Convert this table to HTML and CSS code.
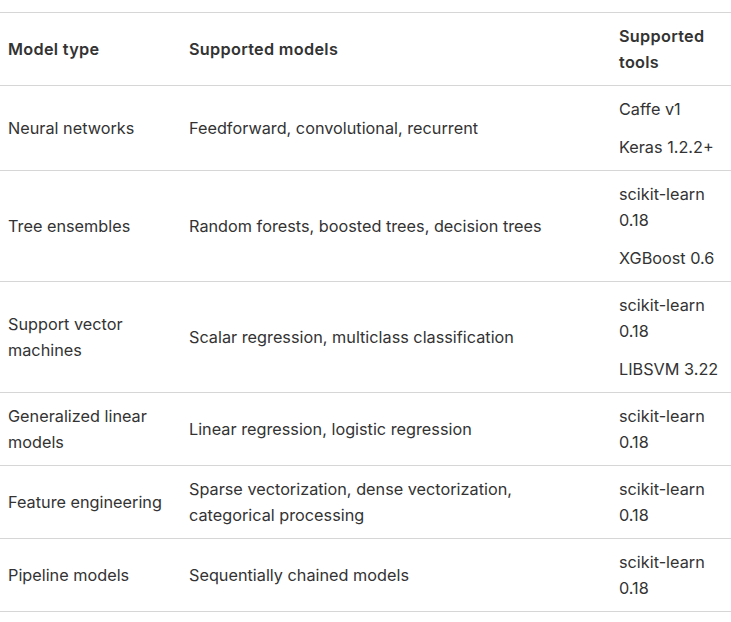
FILE: index.html
```html
<!DOCTYPE html>
<html>
<head>
<meta charset="utf-8">
<link rel="stylesheet" href="styles.css">
</head>
<body>
<table class="models">
  <colgroup>
    <col class="c1"><col class="c2"><col class="c3">
  </colgroup>
  <thead>
    <tr>
      <th>Model type</th>
      <th>Supported models</th>
      <th>Supported tools</th>
    </tr>
  </thead>
  <tbody>
    <tr>
      <td>Neural networks</td>
      <td>Feedforward, convolutional, recurrent</td>
      <td><p>Caffe v1</p><p>Keras 1.2.2+</p></td>
    </tr>
    <tr>
      <td>Tree ensembles</td>
      <td>Random forests, boosted trees, decision trees</td>
      <td><p>scikit-learn 0.18</p><p>XGBoost 0.6</p></td>
    </tr>
    <tr>
      <td>Support vector machines</td>
      <td>Scalar regression, multiclass classification</td>
      <td><p>scikit-learn 0.18</p><p>LIBSVM 3.22</p></td>
    </tr>
    <tr>
      <td>Generalized linear models</td>
      <td>Linear regression, logistic regression</td>
      <td><p>scikit-learn 0.18</p></td>
    </tr>
    <tr>
      <td>Feature engineering</td>
      <td>Sparse vectorization, dense vectorization, categorical processing</td>
      <td><p>scikit-learn 0.18</p></td>
    </tr>
    <tr>
      <td>Pipeline models</td>
      <td>Sequentially chained models</td>
      <td><p>scikit-learn 0.18</p></td>
    </tr>
  </tbody>
</table>
</body>
</html>
```

FILE: styles.css
```css
html, body {
  margin: 0;
  padding: 0;
  background: #fff;
}
body {
  padding-top: 12px;
  font-family: Inter, "Liberation Sans", sans-serif;
  font-size: 16.25px;
  line-height: 26px;
  color: #333;
}
.models {
  width: 731px;
  border-collapse: collapse;
  table-layout: fixed;
}
.c1 { width: 181px; }
.c2 { width: 430px; }
.c3 { width: 120px; }
.models th,
.models td {
  text-align: left;
  vertical-align: middle;
  padding: 10px 16px 10px 8px;
  border-top: 1px solid #d6d6d6;
  border-bottom: 1px solid #d6d6d6;
}
.models th:last-child,
.models td:last-child {
  padding-right: 0;
}
.models th {
  font-weight: 600;
  letter-spacing: 0.3px;
}
.models p {
  margin: 0;
}
.models p + p {
  margin-top: 12px;
}
```
